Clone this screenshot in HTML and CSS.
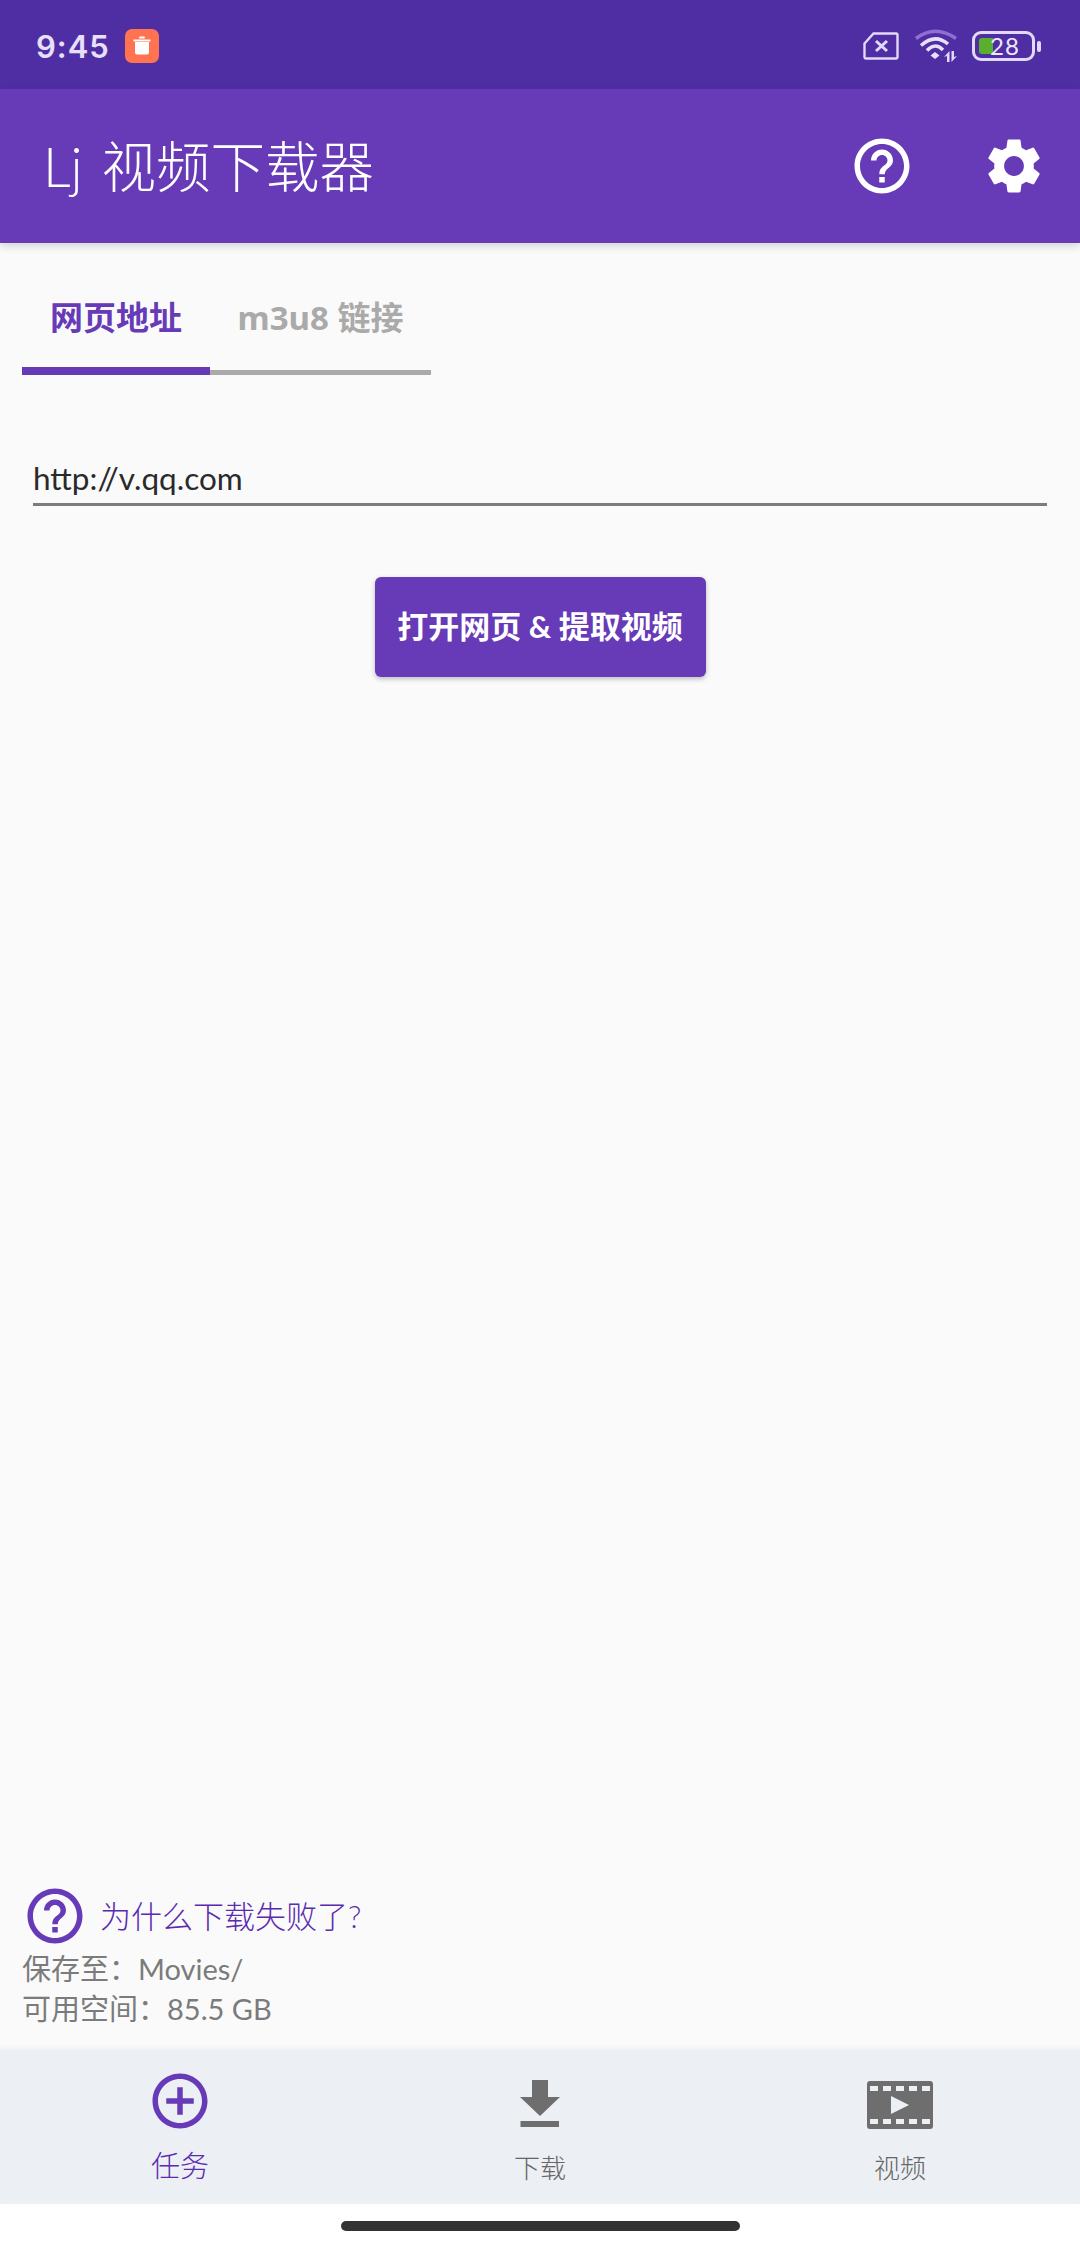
FILE: index.html
```html
<!DOCTYPE html>
<html lang="zh-CN">
<head>
<meta charset="utf-8">
<title>Lj 视频下载器</title>
<link rel="stylesheet" href="styles.css">
</head>
<body>
<div class="page">
  <div class="status-bar">
    <span class="time">9:45</span>
    <svg class="notif" viewBox="0 0 34 34"><rect width="34" height="34" rx="7" fill="#ff7350"/><path d="M10 13h14v10.500a2 2 0 0 1-2 2H12a2 2 0 0 1-2-2z" fill="#fff"/><path d="M8.500 10.500h17v2h-17z" fill="#fff"/><rect x="14" y="7.500" width="6" height="2" rx="1" fill="#fff"/></svg>
    <div class="status-right">
      <svg class="sim" viewBox="0 0 36 28"><path d="M1.500 11.500 10.500 1.500H33a1.500 1.500 0 0 1 1.500 1.500v22a1.500 1.500 0 0 1-1.500 1.500H3A1.500 1.500 0 0 1 1.500 25z" fill="none" stroke="#e2d8f7" stroke-width="2.400"/><path d="M13 9l11 10M24 9 13 19" stroke="#e2d8f7" stroke-width="3"/></svg>
      <svg class="wifi" viewBox="0 0 44 34"><path d="M2 9.500Q21-5 42 9.500" fill="none" stroke="#8f6fd0" stroke-width="3.500"/><path d="M7 16.500Q21 4 34 15" fill="none" stroke="#e8e0f8" stroke-width="3.500"/><path d="M13 21.500Q21 13 29 21" fill="none" stroke="#e8e0f8" stroke-width="3.500"/><path d="M16.500 26.500 21 23l4.500 3.500L21 30z" fill="#e8e0f8"/><path d="M35.500 22v11h-2.500v-6l-3 1zM37.500 22h2.500v6l3-1-5.500 6z" fill="#e2d8f7"/></svg>
      <div class="battery">
        <div class="battery-body"><span class="battery-fill"></span><span class="battery-num">28</span></div>
        <span class="battery-tip"></span>
      </div>
    </div>
  </div>

  <header class="app-bar">
    <h1 class="title">Lj 视频下载器</h1>
    <button class="action" type="button" aria-label="帮助">
      <svg class="icon" viewBox="0 0 24 24"><path d="M11 18h2v-2h-2v2zm1-16C6.480 2 2 6.480 2 12s4.480 10 10 10 10-4.480 10-10S17.520 2 12 2zm0 18c-4.410 0-8-3.590-8-8s3.590-8 8-8 8 3.590 8 8-3.590 8-8 8zm0-14c-2.210 0-4 1.790-4 4h2c0-1.100.9-2 2-2s2 .9 2 2c0 2-3 1.750-3 5h2c0-2.250 3-2.500 3-5 0-2.210-1.790-4-4-4z"/></svg>
    </button>
    <button class="action" type="button" aria-label="设置">
      <svg class="icon" viewBox="0 0 24 24"><path d="M19.140 12.940c.04-.3.06-.61.06-.94 0-.32-.02-.64-.07-.94l2.030-1.580c.18-.14.23-.41.12-.61l-1.920-3.320c-.12-.22-.37-.29-.59-.22l-2.390.96c-.5-.38-1.030-.7-1.620-.94l-.36-2.540c-.04-.24-.24-.41-.48-.41h-3.840c-.24 0-.43.17-.47.41l-.36 2.540c-.59.24-1.130.57-1.620.94l-2.390-.96c-.22-.08-.47 0-.59.22L2.740 8.870c-.12.21-.08.47.12.61l2.030 1.580c-.05.3-.09.63-.09.94s.02.64.07.94l-2.030 1.580c-.18.14-.23.41-.12.61l1.920 3.320c.12.22.37.29.59.22l2.390-.96c.5.38 1.030.7 1.620.94l.36 2.540c.05.24.24.41.48.41h3.840c.24 0 .44-.17.47-.41l.36-2.540c.59-.24 1.130-.56 1.620-.94l2.390.96c.22.08.47 0 .59-.22l1.920-3.320c.12-.22.07-.47-.12-.61l-2.010-1.580zM12 15.600c-1.980 0-3.600-1.620-3.600-3.600s1.620-3.600 3.600-3.600 3.600 1.620 3.600 3.600-1.620 3.600-3.600 3.600z"/></svg>
    </button>
  </header>

  <main class="main">
    <div class="top">
      <nav class="tabs">
        <div class="tab tab-active">网页地址</div>
        <div class="tab tab-idle">m3u8 链接</div>
      </nav>
      <div class="url-field"><span class="url-text">http://v.qq.com</span></div>
      <button class="open-btn" type="button">打开网页 &amp; 提取视频</button>
    </div>
    <div class="foot">
      <div class="why">
        <svg class="icon why-icon" viewBox="0 0 24 24"><path d="M11 18h2v-2h-2v2zm1-16C6.480 2 2 6.480 2 12s4.480 10 10 10 10-4.480 10-10S17.520 2 12 2zm0 18c-4.410 0-8-3.590-8-8s3.590-8 8-8 8 3.590 8 8-3.590 8-8 8zm0-14c-2.210 0-4 1.790-4 4h2c0-1.100.9-2 2-2s2 .9 2 2c0 2-3 1.750-3 5h2c0-2.250 3-2.500 3-5 0-2.210-1.790-4-4-4z"/></svg>
        <span class="why-text">为什么下载失败了?</span>
      </div>
      <div class="info">保存至&#xFF1A;Movies/</div>
      <div class="info">可用空间&#xFF1A;85.5 GB</div>
    </div>
  </main>

  <nav class="bottom-nav">
    <div class="nav-item nav-active">
      <svg class="icon" viewBox="0 0 24 24"><path d="M13 7h-2v4H7v2h4v4h2v-4h4v-2h-4V7zm-1-5C6.480 2 2 6.480 2 12s4.480 10 10 10 10-4.480 10-10S17.520 2 12 2zm0 18c-4.410 0-8-3.590-8-8s3.590-8 8-8 8 3.590 8 8-3.590 8-8 8z"/></svg>
      <span class="nav-label">任务</span>
    </div>
    <div class="nav-item">
      <svg class="icon" viewBox="0 0 66 66"><path d="M25 12h16v17h12L33 48 13 29h12zM13.500 53h38.500v6H13.500z"/></svg>
      <span class="nav-label">下载</span>
    </div>
    <div class="nav-item">
      <svg class="icon" viewBox="0 0 66 66"><path fill-rule="evenodd" d="M3 13h60a3 3 0 0 1 3 3v42a3 3 0 0 1-3 3H3a3 3 0 0 1-3-3V16a3 3 0 0 1 3-3zM3 18v5h8v-5zm13 0v5h8v-5zm13 0v5h8v-5zm13 0v5h8v-5zm13 0v5h8v-5zM3 51v5h8v-5zm13 0v5h8v-5zm13 0v5h8v-5zm13 0v5h8v-5zm13 0v5h8v-5zM24 28v18l18-9z"/></svg>
      <span class="nav-label">视频</span>
    </div>
  </nav>

  <div class="home-area"><span class="home-pill"></span></div>
</div>
</body>
</html>
```

FILE: styles.css
```css
* { box-sizing: border-box; }
html, body { margin: 0; padding: 0; }
body {
  width: 1080px;
  height: 2248px;
  overflow: hidden;
  font-family: "Lato", "Noto Sans CJK SC", sans-serif;
  background: #fff;
}
.page {
  width: 1080px;
  height: 2248px;
  display: flex;
  flex-direction: column;
}
.status-bar {
  height: 89px;
  flex: none;
  background: #4f2ea4;
  display: flex;
  align-items: center;
  padding: 4px 39px 0 36px;
}
.time {
  font-family: "Inter", sans-serif;
  font-size: 31px;
  font-weight: 600;
  color: #e8e0f8;
  letter-spacing: 1px;
  line-height: 34px;
}
.notif { width: 34px; height: 34px; margin: -1px 0 0 15px; flex: none; }
.status-right { margin-left: auto; display: flex; align-items: center; margin-top: -1px; }
.sim { width: 36px; height: 28px; margin-right: 15px; }
.wifi { width: 44px; height: 34px; margin-right: 14px; }
.battery { display: flex; align-items: center; }
.battery-body {
  width: 63px;
  height: 30px;
  border: 3px solid #e2d8f7;
  border-radius: 9px;
  display: flex;
  align-items: center;
  padding-left: 4px;
  overflow: hidden;
}
.battery-fill { width: 14px; height: 16px; background: #5aaf2e; border-radius: 3px 0 0 3px; flex: none; }
.battery-num {
  margin-left: -3px;
  font-family: "Lato", sans-serif;
  font-size: 24px;
  line-height: 24px;
  color: #eee8fb;
  letter-spacing: 1px;
}
.battery-tip { width: 4px; height: 11px; background: #e2d8f7; border-radius: 2px; margin-left: 2px; }

.app-bar {
  height: 154px;
  flex: none;
  background: #673ab7;
  display: flex;
  align-items: center;
  padding-left: 43px;
  box-shadow: 0 3px 8px rgba(0, 0, 0, 0.16);
  position: relative;
}
.title {
  margin: 0 auto 0 0;
  font-size: 54.500px;
  font-weight: 300;
  line-height: 70px;
  word-spacing: 4px;
  color: #fff;
}
.action {
  width: 132px;
  height: 154px;
  padding: 0;
  border: 0;
  background: none;
  display: flex;
  align-items: center;
  justify-content: center;
  fill: #fff;
}
.icon { width: 66px; height: 66px; flex: none; display: block; }

.main {
  flex: 1;
  background: #fafafa;
  display: flex;
  flex-direction: column;
  justify-content: space-between;
  min-height: 0;
}
.top { display: flex; flex-direction: column; }
.tabs {
  display: flex;
  margin: 0 0 0 22px;
  width: 409px;
  height: 132px;
}
.tab {
  height: 132px;
  display: flex;
  align-items: center;
  justify-content: center;
  font-family: "Noto Sans", "Noto Sans CJK SC", sans-serif;
  font-size: 33px;
  font-weight: 700;
}
.tab-active { width: 188px; padding-top: 22px; color: #673ab7; border-bottom: 8px solid #673ab7; }
.tab-idle { width: 221px; padding-top: 19px; color: #aaa; border-bottom: 5px solid #aaa; }
.url-field {
  margin: 80px 33px 0;
  height: 51px;
  border-bottom: 3px solid #7c7c7c;
  display: flex;
  align-items: center;
}
.url-text { font-size: 31.500px; font-weight: 400; line-height: 40px; color: #2a2a2a; margin-top: -3px; }
.open-btn {
  align-self: center;
  margin-top: 71px;
  width: 331px;
  height: 100px;
  border: 0;
  border-radius: 6px;
  background: #673ab7;
  color: #fff;
  font-family: inherit;
  font-size: 31px;
  font-weight: 700;
  padding: 0 0 5px;
  box-shadow: 0 2px 5px rgba(0, 0, 0, 0.25);
}
.foot { padding: 0 0 21px 22px; }
.why { display: flex; align-items: center; height: 66px; }
.why-icon { fill: #673ab7; }
.why-text { margin-left: 12px; font-size: 31px; font-weight: 300; line-height: 40px; color: #5a2bb0; }
.info { font-size: 29px; font-weight: 400; line-height: 40px; color: #7b7b7b; }

.bottom-nav {
  height: 154px;
  flex: none;
  background: #eceff3;
  display: flex;
  box-shadow: 0 -2px 6px rgba(0, 0, 0, 0.05);
  position: relative;
}
.nav-item {
  flex: 1;
  display: flex;
  flex-direction: column;
  align-items: center;
  padding-top: 18px;
  fill: #6e6e6e;
  color: #666;
}
.nav-label { font-size: 26px; font-weight: 300; line-height: 36px; margin-top: 16px; }
.nav-active { fill: #673ab7; color: #5a2bb0; }
.nav-active .nav-label { font-size: 29px; margin-top: 14px; }
.home-area {
  height: 44px;
  flex: none;
  background: #fff;
  display: flex;
  justify-content: center;
  padding-top: 17px;
}
.home-pill { width: 399px; height: 10px; border-radius: 5px; background: #333; }
```
